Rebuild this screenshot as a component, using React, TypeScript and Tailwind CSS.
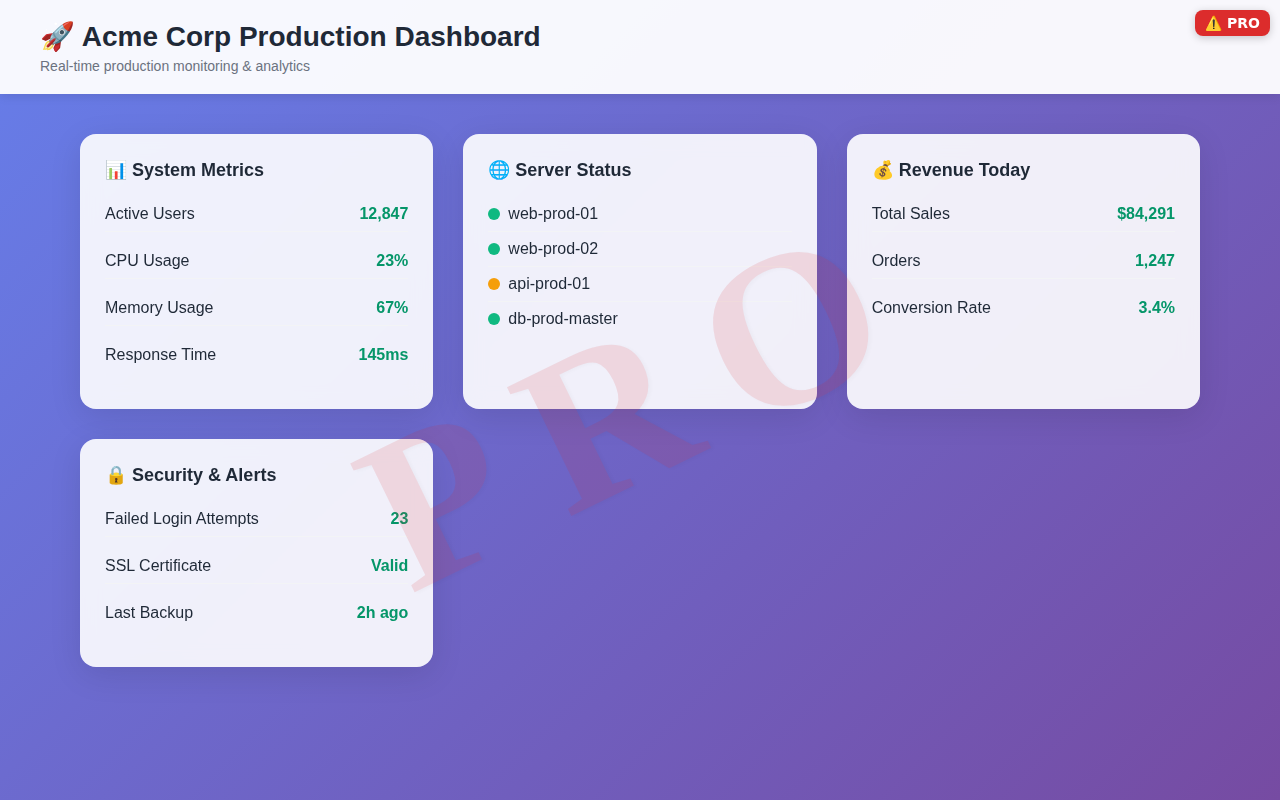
import type { ReactNode } from "react";

type Metric = { label: string; value: string };
type Server = { name: string; healthy: boolean };

const systemMetrics: Metric[] = [
  { label: "Active Users", value: "12,847" },
  { label: "CPU Usage", value: "23%" },
  { label: "Memory Usage", value: "67%" },
  { label: "Response Time", value: "145ms" },
];

const servers: Server[] = [
  { name: "web-prod-01", healthy: true },
  { name: "web-prod-02", healthy: true },
  { name: "api-prod-01", healthy: false },
  { name: "db-prod-master", healthy: true },
];

const revenue: Metric[] = [
  { label: "Total Sales", value: "$84,291" },
  { label: "Orders", value: "1,247" },
  { label: "Conversion Rate", value: "3.4%" },
];

const security: Metric[] = [
  { label: "Failed Login Attempts", value: "23" },
  { label: "SSL Certificate", value: "Valid" },
  { label: "Last Backup", value: "2h ago" },
];

function Card({ title, children }: { title: string; children: ReactNode }) {
  return (
    <section className="rounded-2xl bg-white/90 p-[25px] shadow-[0_8px_32px_rgba(0,0,0,0.1)] backdrop-blur-[10px]">
      <h2 className="mb-[15px] text-lg leading-[23px] font-bold">{title}</h2>
      {children}
    </section>
  );
}

function MetricList({ items }: { items: Metric[] }) {
  return (
    <dl>
      {items.map((item) => (
        <div
          key={item.label}
          className="mb-3 flex justify-between border-b border-gray-100 py-2 leading-[18px] last:border-b-0"
        >
          <dt>{item.label}</dt>
          <dd className="font-bold text-[#059669]">{item.value}</dd>
        </div>
      ))}
    </dl>
  );
}

function ServerList({ items }: { items: Server[] }) {
  return (
    <ul>
      {items.map((server) => (
        <li
          key={server.name}
          className="flex items-center gap-2 border-b border-gray-100 py-2 leading-[18px] last:border-b-0"
        >
          <span
            className={
              server.healthy
                ? "size-3 rounded-full bg-[#10b981]"
                : "size-3 rounded-full bg-[#f59e0b]"
            }
          />
          {server.name}
        </li>
      ))}
    </ul>
  );
}

export default function App() {
  return (
    <div className="min-h-screen bg-[linear-gradient(135deg,#667eea_0%,#764ba2_100%)] font-['Liberation_Sans',Arial,sans-serif] text-[#1f2937]">
      <header className="bg-white/95 px-10 py-5 shadow-[0_2px_10px_rgba(0,0,0,0.1)]">
        <h1 className="text-[28px] leading-[33px] font-bold">🚀 Acme Corp Production Dashboard</h1>
        <p className="mt-[5px] text-sm leading-4 text-[#6b7280]">
          Real-time production monitoring &amp; analytics
        </p>
      </header>

      <main className="mx-auto grid max-w-[1200px] grid-cols-[repeat(auto-fit,minmax(300px,1fr))] gap-[30px] p-10">
        <Card title="📊 System Metrics">
          <MetricList items={systemMetrics} />
        </Card>
        <Card title="🌐 Server Status">
          <ServerList items={servers} />
        </Card>
        <Card title="💰 Revenue Today">
          <MetricList items={revenue} />
        </Card>
        <Card title="🔒 Security & Alerts">
          <MetricList items={security} />
        </Card>
      </main>

      <div
        aria-hidden="true"
        className="pointer-events-none fixed inset-0 flex items-center justify-center overflow-hidden"
      >
        <div className="flex -rotate-26 gap-10 pr-10 font-['Liberation_Serif',serif] text-[220px] leading-none font-bold text-[#dc2626] opacity-12 [text-shadow:2px_2px_4px_rgba(0,0,0,0.2)]">
          <span>P</span>
          <span>R</span>
          <span>O</span>
        </div>
      </div>

      <div className="fixed top-[10px] right-[10px] rounded-lg bg-[#dc2c2c] px-[10px] py-[5px] font-['DejaVu_Sans',sans-serif] text-sm leading-4 font-bold text-white shadow-[0_2px_8px_rgba(0,0,0,0.2)]">
        ⚠️ PRO
      </div>
    </div>
  );
}
